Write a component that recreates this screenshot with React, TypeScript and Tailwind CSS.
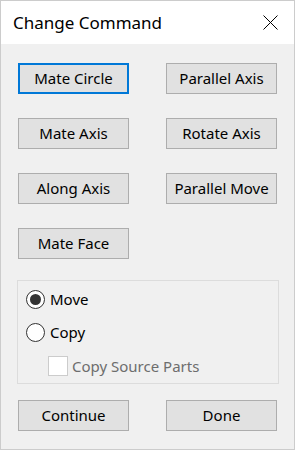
import React from 'react'

const FONT = { fontFamily: '"Noto Sans", "Open Sans", Arial, sans-serif' }

function WinButton({ label, focused = false }: { label: string; focused?: boolean }) {
  return (
    <button
      className={[
        'w-[111px] h-[31px] bg-[#e1e1e1] text-[15px] text-black leading-none flex items-center justify-center',
        focused ? 'border-2 border-[#0078d7]' : 'border border-[#adadad]',
      ].join(' ')}
    >
      {label}
    </button>
  )
}

function Radio({ label, checked }: { label: string; checked?: boolean }) {
  return (
    <div className="flex items-center h-[20px]">
      <span className="w-[19px] h-[19px] rounded-full border border-[#333333] bg-white flex items-center justify-center">
        {checked && <span className="w-[11px] h-[11px] rounded-full bg-[#333333]" />}
      </span>
      <span className="ml-[5px] text-[15px] text-black leading-none">{label}</span>
    </div>
  )
}

export default function App() {
  return (
    <div className="w-[295px] h-[450px] border border-[#cccccc] bg-[#f0f0f0] flex flex-col" style={FONT}>
      {/* Title bar */}
      <div className="h-[43px] bg-white flex items-center justify-between pl-[12px] pr-[16px]">
        <span className="text-[17px] text-black leading-none pb-[1px]">Change Command</span>
        <svg width="15" height="15" viewBox="0 0 15 15" className="mb-[1px]">
          <path d="M0.5 0.5 L14.5 14.5 M14.5 0.5 L0.5 14.5" stroke="#000" strokeWidth="1" fill="none" />
        </svg>
      </div>

      {/* Command buttons */}
      <div className="grid grid-cols-[111px_111px] gap-x-[37px] gap-y-[24px] pl-[17px] pt-[19px]">
        <WinButton label="Mate Circle" focused />
        <WinButton label="Parallel Axis" />
        <WinButton label="Mate Axis" />
        <WinButton label="Rotate Axis" />
        <WinButton label="Along Axis" />
        <WinButton label="Parallel Move" />
        <WinButton label="Mate Face" />
      </div>

      {/* Move / Copy group */}
      <div className="ml-[16px] mt-[21px] w-[262px] h-[104px] border border-[#dcdcdc] pl-[8px] pt-[8px]">
        <Radio label="Move" checked />
        <div className="mt-[13px]">
          <Radio label="Copy" />
        </div>
        <div className="mt-[14px] ml-[22px] flex items-center h-[20px]">
          <span className="w-[20px] h-[20px] border border-[#cccccc] bg-white" />
          <span className="ml-[4px] text-[15px] text-[#6d6d6d] leading-none">Copy Source Parts</span>
        </div>
      </div>

      {/* Footer buttons */}
      <div className="flex gap-x-[37px] pl-[17px] mt-[16px]">
        <WinButton label="Continue" />
        <WinButton label="Done" />
      </div>
    </div>
  )
}
